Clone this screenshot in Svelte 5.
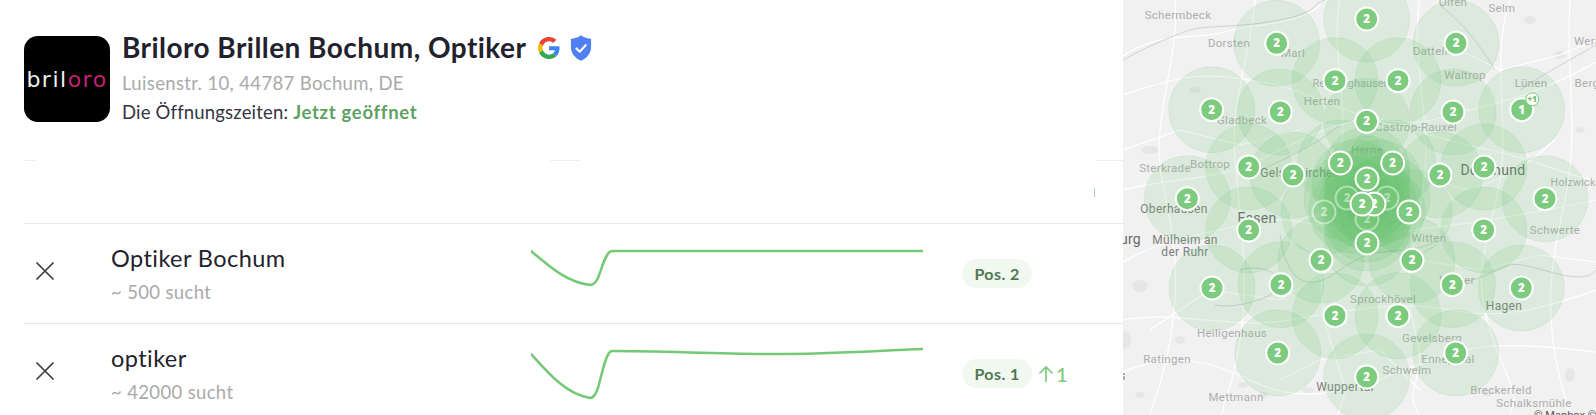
<script>
  const ring = [
    [1366.7,19],[1276.7,43.3],[1456,43.3],[1335,80.7],[1398,80.7],[1211.7,109.7],[1280.3,112],[1453,112],
    [1366.7,121.3],[1248.7,167],[1293,175],[1340.3,163],[1392.7,163],[1440,175],[1484,167],[1187.3,198.7],[1545,198.7],
    [1409,212],[1248.7,230],[1483.7,230],[1367,243],[1321,260.3],[1412,260.3],[1281,284.7],[1452.3,284.7],[1212,288],
    [1521.3,288],[1335,315.7],[1398,315.7],[1277.7,353],[1455.7,353],[1366.7,377],[1521.7,109.7]
  ];
  const inner = [
    [1367,198],[1347,198],[1387,198],[1367,219],[1355,183],[1379,183],[1352,210],[1382,210],[1367,170],[1367,228],
    [1367,190],[1367,206],[1324,212],[1374,204],[1367,179],[1362,204]
  ];
  const faint = [[1324,212],[1347,198],[1387,198],[1367,219]];
  const top = [[1374,204],[1367,179],[1362,204]];
  const labels = [
    ['Schermbeck',1178,19,'m'],['Selm',1502,12,'m'],['Olfen',1453,6,'m'],['Werne',1591,45,'m'],['Dorsten',1229,47,'m'],
    ['Marl',1293,57,'m'],['Datteln',1432,55,'m'],['Waltrop',1465,79,'m'],['Lünen',1531,87,'m'],['Bergkamen',1605,87,'m'],
    ['Herten',1322,105,'m'],['Recklinghausen',1351,87,'t'],['Gladbeck',1242,124,'m'],['Castrop-Rauxel',1416,131,'m'],
    ['Herne',1367,154,'m'],['Sterkrade',1165,172,'m'],['Bottrop',1210,168,'m'],['Gelsenkirchen',1300,177,'d'],
    ['Dortmund',1493,175,'D'],['Holzwickede',1582,186,'s'],['Oberhausen',1174,213,'d'],['Essen',1257,223,'D'],
    ['Duisburg',1112,244,'D'],['Mülheim an',1185,244,'d'],['der Ruhr',1185,256,'d'],['Witten',1429,242,'m'],
    ['Schwerte',1555,234,'m'],['Wetter',1457,284,'m'],['Hagen',1504,310,'d'],['Sprockhövel',1383,303,'m'],
    ['Heiligenhaus',1232,337,'m'],['Gevelsberg',1432,342,'m'],['Ennepetal',1448,363,'m'],['Ratingen',1167,363,'m'],
    ['Schwelm',1407,374,'m'],['Wuppertal',1345,391,'d'],['Mettmann',1236,401,'m'],['Breckerfeld',1501,394,'m'],
    ['Schalksmühle',1534,407,'m'],['Neuss',1108,380,'d']
  ];
  const roads = [
    'M1123 56 C1160 30 1200 40 1225 32 S1300 25 1320 5',
    'M1123 95 C1170 80 1190 72 1235 78 S1290 88 1322 101 S1400 130 1440 118 S1530 100 1596 62',
    'M1123 190 C1170 178 1220 180 1260 160 S1340 120 1366 121 S1440 140 1490 150 S1560 175 1596 180',
    'M1123 262 C1160 240 1210 232 1257 222 S1340 240 1400 232 S1500 220 1596 200',
    'M1123 320 C1180 310 1230 330 1290 320 S1400 300 1450 310 S1540 310 1596 290',
    'M1123 372 C1170 352 1210 360 1250 380 S1330 400 1400 372 S1490 340 1596 352',
    'M1175 0 C1180 60 1150 120 1162 180 S1190 300 1150 415',
    'M1255 0 C1250 60 1230 100 1235 160 S1250 280 1240 340 S1225 390 1222 415',
    'M1340 0 C1330 50 1350 100 1340 160 S1310 280 1330 340 S1345 390 1338 415',
    'M1420 0 C1410 60 1430 110 1425 170 S1400 280 1415 330 S1400 390 1420 415',
    'M1510 0 C1490 60 1510 120 1500 180 S1470 270 1490 330 S1520 390 1510 415',
    'M1570 0 C1565 70 1580 130 1565 200 S1540 320 1570 415',
    'M1123 150 L1180 130 L1240 145 L1300 130',
    'M1440 40 L1500 70 L1560 55 L1596 40',
    'M1150 330 L1210 290 L1280 300 L1330 270',
    'M1420 260 L1480 270 L1540 255 L1596 262',
    'M1280 380 L1320 360 L1380 350 L1420 390',
    'M1430 180 L1470 190 L1520 170 L1555 140'
  ];
  const rails = [
    'M1123 60 C1150 45 1175 35 1190 30 S1240 28 1280 20 S1310 5 1325 0',
    'M1440 5 C1465 25 1480 45 1495 70 M1520 90 C1550 70 1570 60 1596 45',
    'M1250 175 C1280 160 1310 150 1340 125',
    'M1280 235 C1285 270 1300 300 1340 270 S1400 260 1440 240',
    'M1240 270 C1260 265 1275 270 1280 282 S1240 310 1215 305',
    'M1440 275 C1460 295 1490 270 1510 265 S1580 290 1596 270'
  ];
  const blobs = [
    [1150,150,9,4],[1140,286,8,6],[1125,340,6,9],[1195,90,6,3],[1243,385,5,3],[1487,392,6,4],[1530,20,6,4],
    [1308,390,6,3],[1560,55,5,4],[1140,395,5,3],[1580,130,5,3],[1263,395,5,3],[1570,375,5,7],[1180,340,5,4]
  ];
</script>

<div class="page">
  <section class="panel">
    <header class="biz">
      <div class="logo"><span class="w">bril</span><span class="p">oro</span></div>
      <div class="info">
        <div class="title-row">
          <h1>Briloro Brillen Bochum, Optiker</h1>
          <svg class="g" viewBox="0 0 48 48" aria-hidden="true">
            <path fill="#EA4335" d="M24 9.5c3.5 0 6.7 1.2 9.2 3.600l6.900-6.900C35.900 2.400 30.500 0 24 0 14.600 0 6.500 5.400 2.600 13.200l8 6.200C12.500 13.700 17.800 9.500 24 9.500z"/>
            <path fill="#4285F4" d="M47 24.500c0-1.600-.1-3.100-.4-4.500H24v9h12.900c-.6 3-2.200 5.500-4.700 7.200l7.700 6C44.400 38 47 31.800 47 24.500z"/>
            <path fill="#FBBC05" d="M10.500 28.600c-.5-1.400-.8-3-.8-4.600s.3-3.200.8-4.600l-8-6.200C.9 16.400 0 20.100 0 24s.9 7.600 2.600 10.800l7.900-6.200z"/>
            <path fill="#34A853" d="M24 48c6.500 0 11.900-2.100 15.900-5.800l-7.700-6c-2.200 1.500-4.900 2.300-8.200 2.300-6.200 0-11.500-4.200-13.400-9.900l-8 6.200C6.500 42.600 14.600 48 24 48z"/>
          </svg>
          <svg class="shield" viewBox="0 0 24 28" aria-hidden="true">
            <path fill="#4f7ff0" d="M12 0c3 2.400 7 3.700 11 3.900V13c0 7-4.700 12.300-11 15C5.700 25.300 1 20 1 13V3.900C5 3.700 9 2.400 12 0z"/>
            <path fill="none" stroke="#fff" stroke-width="2.400" stroke-linecap="round" stroke-linejoin="round" d="M7 14.500l3.600 3.500 6.500-7"/>
          </svg>
        </div>
        <p class="addr">Luisenstr. 10, 44787 Bochum, DE</p>
        <p class="hours">Die Öffnungszeiten: <b>Jetzt geöffnet</b></p>
      </div>
    </header>

    <div class="ghost"><i class="a"></i><i class="b"></i><i class="c"></i></div>
    <div class="tick-row"><i></i></div>

    <div class="row first">
      <svg class="x" viewBox="0 0 24 24" aria-hidden="true"><path d="M3.500 3.500l17 17M20.500 3.500l-17 17"/></svg>
      <div class="kw">
        <div class="name">Optiker Bochum</div>
        <div class="sub">~ 500 sucht</div>
      </div>
      <svg class="spark" viewBox="0 0 392 60" aria-hidden="true"><path d="M0 7C18 22 35 38 59 41C63 41 65 38 67 34C71 24 75 7 81 7L392 7"/></svg>
      <div class="pos"><span class="pill">Pos. 2</span></div>
    </div>

    <div class="row">
      <svg class="x" viewBox="0 0 24 24" aria-hidden="true"><path d="M3.500 3.500l17 17M20.500 3.500l-17 17"/></svg>
      <div class="kw">
        <div class="name">optiker</div>
        <div class="sub">~ 42000 sucht</div>
      </div>
      <svg class="spark" viewBox="0 0 392 60" aria-hidden="true"><path d="M0 10C18 30 35 50 59 54C63 54 65 50 67 44C71 30 75 7 81 7C130 7 190 10 245 10C300 10 340 7 392 5"/></svg>
      <div class="pos">
        <span class="pill">Pos. 1</span>
        <svg class="up" viewBox="0 0 16 18" aria-hidden="true"><path d="M8 17V2M1.500 8.500L8 2l6.500 6.500"/></svg>
        <span class="delta">1</span>
      </div>
    </div>
  </section>

  <svg class="map" viewBox="1123 0 473 415" role="img" aria-label="Karte">
    <rect x="1123" y="0" width="473" height="415" fill="#f1f1f1"/>
    {#each blobs as b}<ellipse cx={b[0]} cy={b[1]} rx={b[2]} ry={b[3]} fill="#e6e6e6"/>{/each}
    {#each roads as d}<path {d} fill="none" stroke="#fff" stroke-width="1.200"/>{/each}
    {#each rails as d}<path {d} fill="none" stroke="#d2d2d2" stroke-width="1"/>{/each}
    {#each labels as l}
      <text x={l[1]} y={l[2]} text-anchor="middle" class={'lb ' + l[3]}>{l[0]}</text>
    {/each}
    {#each inner as c}<circle class="halo" cx={c[0]} cy={c[1]} r="43"/>{/each}
    {#each ring as c}<circle class="halo" cx={c[0]} cy={c[1]} r="43"/>{/each}
    {#each faint as m}<g class="mk faint"><circle cx={m[0]} cy={m[1]} r="11.500"/><text x={m[0]} y={m[1] + 4}>2</text></g>{/each}
    {#each ring as m, i}
      {#if i !== ring.length - 1}
        <g class="mk"><circle cx={m[0]} cy={m[1]} r="11.500"/><text x={m[0]} y={m[1] + 4}>2</text></g>
      {/if}
    {/each}
    <g class="mk"><circle cx="1521.700" cy="109.700" r="11.500"/><text x="1521.700" y="113.700">1</text></g>
    <g class="plus"><circle cx="1532.300" cy="99.300" r="6.500"/><text x="1532.300" y="102">+1</text></g>
    {#each top as m}<g class="mk"><circle cx={m[0]} cy={m[1]} r="11.500"/><text x={m[0]} y={m[1] + 4}>2</text></g>{/each}
    <text x="1534" y="419" class="attr">© Mapbox © OpenStreetMap</text>
  </svg>
</div>

<style>
  :global(body) { margin: 0; background: #fff; }
  .page {
    display: flex;
    width: 1596px;
    height: 415px;
    overflow: hidden;
    font-family: Lato, "Noto Sans", sans-serif;
    color: #22222c;
  }
  .panel { width: 1123px; flex: none; box-sizing: border-box; padding-left: 24px; background: #fff; }
  .map { width: 473px; height: 415px; flex: none; display: block; }

  .biz { display: flex; gap: 12px; padding-top: 36px; height: 124px; box-sizing: border-box; }
  .logo {
    width: 86px; height: 86px; flex: none; box-sizing: border-box;
    background: #000; border-radius: 14px;
    display: flex; align-items: center; justify-content: center;
    font-family: "DejaVu Sans", sans-serif; font-size: 22px; letter-spacing: 1.5px;
  }
  .logo .w { color: #f1f1f1; }
  .logo .p { color: #c2226f; }
  .info { margin-top: -4px; }
  .title-row { display: flex; align-items: center; height: 30px; }
  h1 { margin: 0; font-size: 28px; letter-spacing: .45px; font-weight: 700; line-height: 30px; white-space: nowrap; color: #22222c; }
  .g { width: 22px; height: 22px; margin-left: 12px; margin-top: 1px; }
  .shield { width: 22px; height: 26px; margin-left: 10px; margin-top: 1px; }
  .addr { margin: 9px 0 0; font-size: 18.500px; letter-spacing: .35px; line-height: 24px; color: #aaa9a9; }
  .hours { margin: 5px 0 0; font-size: 18.500px; letter-spacing: .18px; line-height: 24px; color: #35353f; }
  .hours b { color: #5fa161; font-weight: 700; letter-spacing: .7px; }

  .ghost { display: flex; height: 1px; margin-top: 36px; }
  .ghost i { display: block; height: 1px; background: #eeeeee; }
  .ghost .a { width: 12px; }
  .ghost .b { width: 30px; margin-left: 514px; }
  .ghost .c { width: 28px; margin-left: 515px; }
  .tick-row { height: 62px; padding-left: 1070px; box-sizing: border-box; padding-top: 27px; }
  .tick-row i { display: block; width: 1px; height: 9px; background: #a9c3ef; }

  .row {
    height: 101px;
    box-sizing: border-box;
    border-top: 1.500px solid #e9e9e9;
    display: grid;
    grid-template-columns: 87px 420px 392px auto;
    align-items: start;
  }
  .row.first { height: 100px; }
  .x { width: 24px; height: 24px; margin: 35px 0 0 9px; }
  .x path { fill: none; stroke: #3a3a44; stroke-width: 1.700; }
  .name { margin-top: 19px; font-size: 23.500px; letter-spacing: .43px; line-height: 30px; color: #22222c; }
  .sub { margin-top: 7px; font-size: 18.500px; letter-spacing: .35px; line-height: 24px; color: #aaa9a9; }
  .spark { width: 392px; height: 60px; margin-top: 20px; }
  .spark path { fill: none; stroke: #74c976; stroke-width: 2.500; stroke-linecap: round; stroke-linejoin: round; }
  .pos { display: flex; align-items: center; margin: 35px 0 0 39px; }
  .pill {
    display: inline-flex; align-items: center; justify-content: center;
    width: 70px; height: 29px; border-radius: 15px;
    background: #f0f8f0; color: #4f7753; font-size: 16px; letter-spacing: .4px; font-weight: 700;
  }
  .up { width: 16px; height: 18px; margin-left: 6px; }
  .up path { fill: none; stroke: #7ccb7e; stroke-width: 1.700; }
  .delta { margin-left: 2px; font-size: 20px; color: #7ccb7e; font-weight: 500; }

  .lb { font-family: Roboto, sans-serif; font-size: 11.500px; fill: #aeaeae; letter-spacing: .3px; }
  .lb.s { font-size: 10.500px; }
  .lb.t { font-size: 11px; letter-spacing: 0; }
  .lb.d { fill: #7f7f7f; font-size: 12px; }
  .lb.D { fill: #6a6a6a; font-size: 14px; }
  .halo { fill: rgba(104, 196, 110, .15); stroke: rgba(104, 190, 110, .14); stroke-width: 1; }
  .mk circle { fill: #7ccb7e; stroke: #fff; stroke-width: 2; }
  .mk text { fill: #fff; font-family: "Open Sans", sans-serif; font-size: 11.500px; font-weight: 800; text-anchor: middle; }
  .mk.faint { opacity: .45; }
  .plus circle { fill: #fff; stroke: #7ccb7e; stroke-width: 1; }
  .plus text { fill: #6dbb70; font-family: "Open Sans", sans-serif; font-size: 8px; font-weight: 800; text-anchor: middle; }
  .attr { font-family: Roboto, sans-serif; font-size: 11px; fill: #555; }
</style>
